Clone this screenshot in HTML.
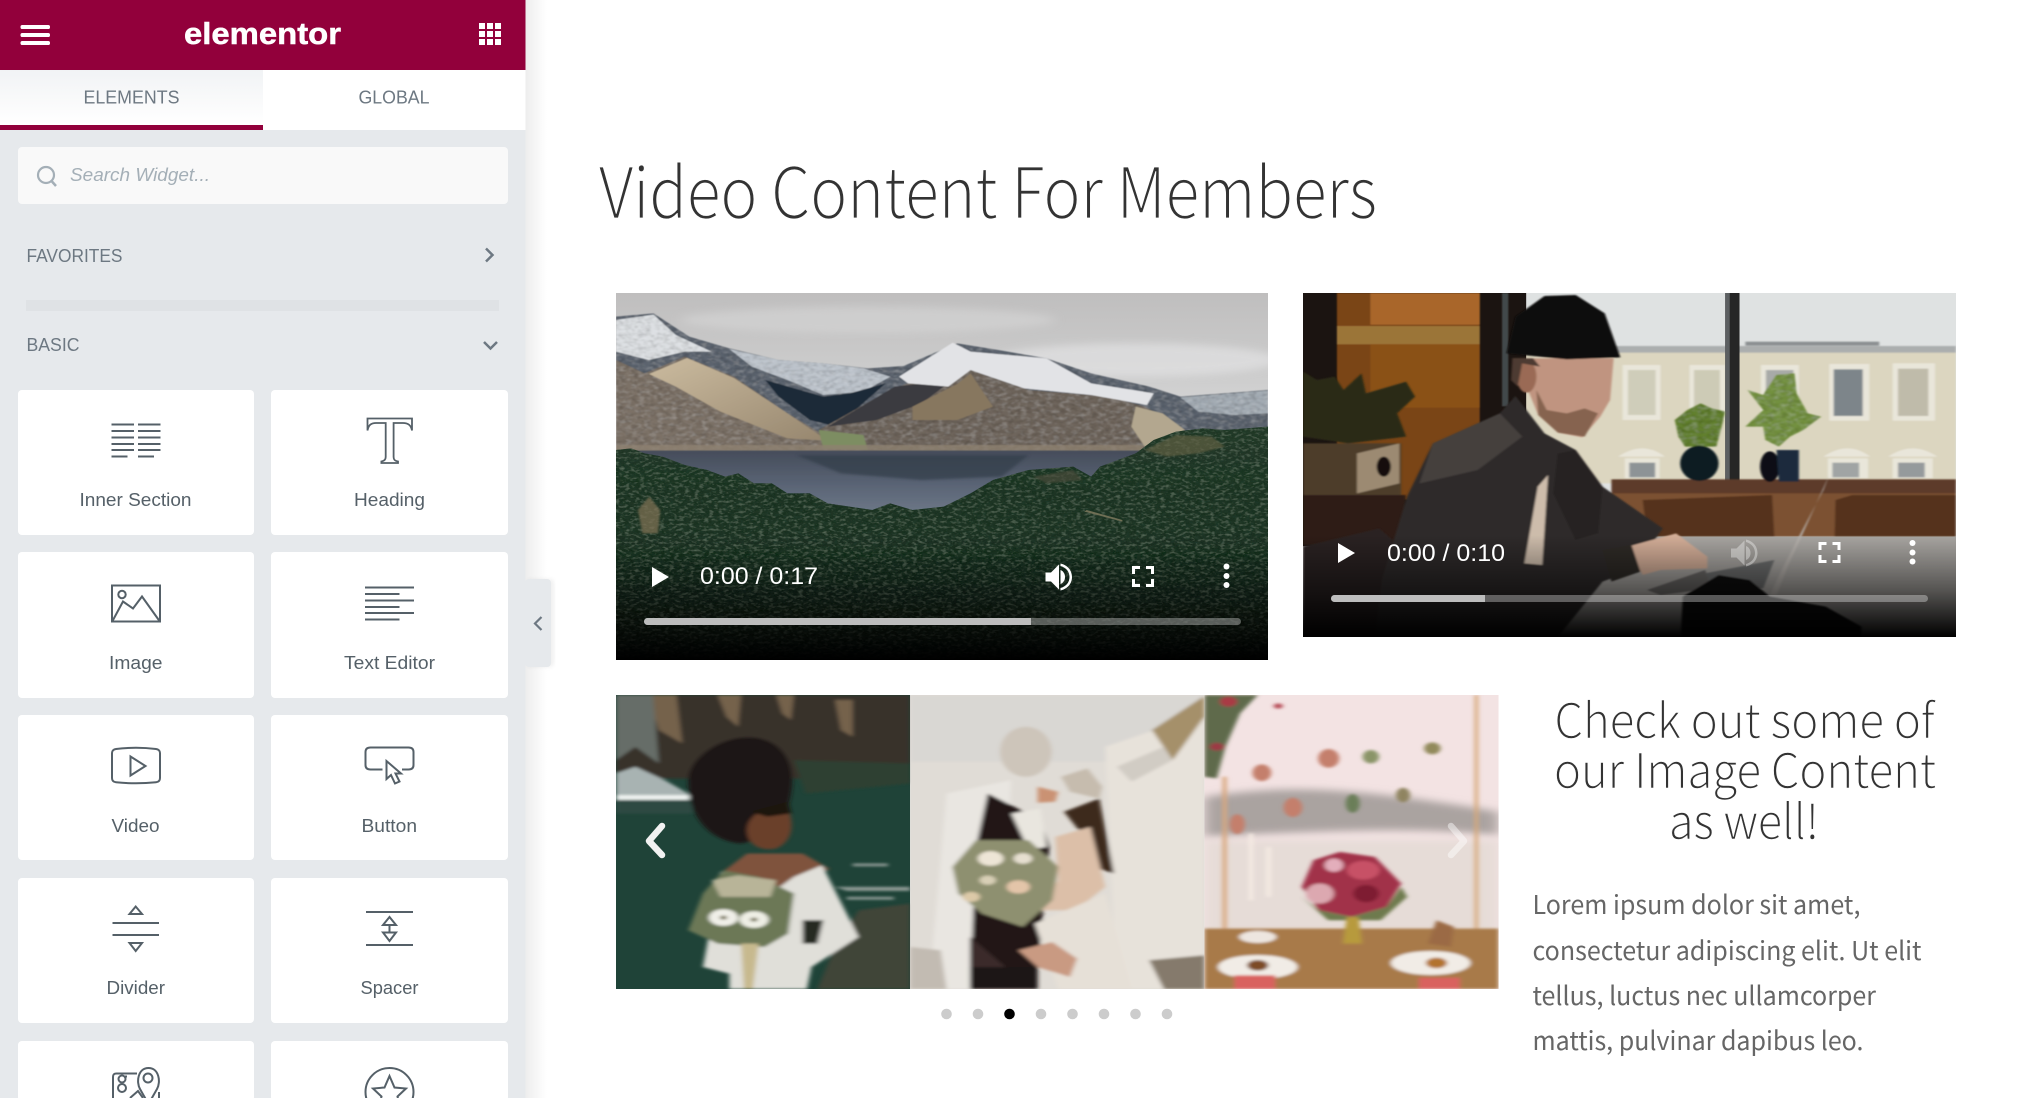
<!DOCTYPE html>
<html lang="en"><head><meta charset="utf-8"><title>Video Content For Members</title>
<style>
html,body{margin:0;padding:0;background:#fff;width:2025px;height:1098px;overflow:hidden}
svg{display:block}
.r{font-family:"Liberation Sans",sans-serif}
.s{font-family:"Noto Sans CJK JP","Liberation Sans",sans-serif}
.lab{font-size:18px;fill:#556068}
.ic{fill:none;stroke:#556068;stroke-width:2}
.t{font-family:"Liberation Sans",sans-serif;font-size:24px;fill:#fff}
</style></head><body>
<svg xmlns="http://www.w3.org/2000/svg" width="2025" height="1098" viewBox="0 0 2025 1098">
<defs>
<linearGradient id="shadow" x1="0" x2="1" y1="0" y2="0"><stop offset="0" stop-color="#000" stop-opacity=".07"/><stop offset="1" stop-color="#000" stop-opacity="0"/></linearGradient>
<linearGradient id="tab" x1="0" x2="0" y1="0" y2="1"><stop offset="0" stop-color="#f1f3f5"/><stop offset=".9" stop-color="#fff"/></linearGradient>
<linearGradient id="ctl" x1="0" x2="0" y1="0" y2="1"><stop offset="0" stop-color="#000" stop-opacity="0"/><stop offset=".55" stop-color="#000" stop-opacity=".5"/><stop offset="1" stop-color="#000" stop-opacity="1"/></linearGradient>
<linearGradient id="sky" x1="0" x2="0" y1="0" y2="1"><stop offset="0" stop-color="#bfbebe"/><stop offset=".5" stop-color="#cdcdcd"/><stop offset="1" stop-color="#dedee0"/></linearGradient>
<linearGradient id="lake" x1="0" x2="0" y1="0" y2="1"><stop offset="0" stop-color="#454c5a"/><stop offset=".5" stop-color="#5a6475"/><stop offset="1" stop-color="#717c8c"/></linearGradient>
<linearGradient id="forest" x1="0" x2="0" y1="0" y2="1"><stop offset="0" stop-color="#223827"/><stop offset=".5" stop-color="#1a2f20"/><stop offset="1" stop-color="#101d14"/></linearGradient>
<linearGradient id="lit" x1="0" x2="1" y1="0" y2="1"><stop offset="0" stop-color="#cbbb9f"/><stop offset="1" stop-color="#96866e"/></linearGradient>
<filter id="b0" x="-5%" y="-5%" width="110%" height="110%"><feGaussianBlur stdDeviation="1.500"/></filter>
<filter id="b1" x="-5%" y="-5%" width="110%" height="110%"><feGaussianBlur stdDeviation="2.500"/></filter>
<filter id="b2" x="-10%" y="-10%" width="120%" height="120%"><feGaussianBlur stdDeviation="4"/></filter>
<filter id="b3" x="-20%" y="-20%" width="140%" height="140%"><feGaussianBlur stdDeviation="12"/></filter>
<filter id="tex" x="0" y="0" width="100%" height="100%">
<feTurbulence type="fractalNoise" baseFrequency=".09 .13" numOctaves="2" seed="4" result="n"/>
<feColorMatrix in="n" type="matrix" values="0 0 0 0 .02  0 0 0 0 .05  0 0 0 0 .03  1.200 0 0 0 -.4" result="d"/>
<feColorMatrix in="n" type="matrix" values="0 0 0 0 .3  0 0 0 0 .42  0 0 0 0 .3  0 .7 0 0 -.34" result="l"/>
<feComposite in="d" in2="SourceAlpha" operator="in" result="c"/>
<feComposite in="l" in2="SourceAlpha" operator="in" result="e"/>
<feMerge><feMergeNode in="SourceGraphic"/><feMergeNode in="c"/><feMergeNode in="e"/></feMerge>
</filter>
<filter id="speck" x="0" y="0" width="100%" height="100%">
<feTurbulence type="fractalNoise" baseFrequency=".07 .1" numOctaves="2" seed="9" result="n"/>
<feColorMatrix in="n" type="matrix" values="0 0 0 0 0  0 0 0 0 0  0 0 0 0 0  .7 0 0 0 -.27" result="d"/>
<feColorMatrix in="n" type="matrix" values="0 0 0 0 1  0 0 0 0 1  0 0 0 0 1  0 .35 0 0 -.16" result="l"/>
<feComposite in="d" in2="SourceAlpha" operator="in" result="c"/>
<feComposite in="l" in2="SourceAlpha" operator="in" result="e"/>
<feMerge><feMergeNode in="SourceGraphic"/><feMergeNode in="c"/><feMergeNode in="e"/></feMerge>
</filter>
</defs>

<rect width="2025" height="1098" fill="#fff"/>

<!-- ===== Title ===== -->
<text class="s" x="599" y="218" font-size="70" font-weight="300" fill="#333" stroke="#fff" stroke-width=".7" textLength="778" lengthAdjust="spacingAndGlyphs">Video Content For Members</text>

<!-- ===== Video 1 ===== -->
<svg x="616" y="293" width="652" height="367" viewBox="36 39 1460 1101" preserveAspectRatio="none">
<rect x="36" y="39" width="1460" height="500" fill="url(#sky)"/>
<ellipse cx="600" cy="120" rx="420" ry="40" fill="#d6d6d6" opacity=".6" filter="url(#b3)"/>
<ellipse cx="1200" cy="240" rx="320" ry="50" fill="#e2e2e3" opacity=".7" filter="url(#b3)"/>
<g filter="url(#b0)">
<g filter="url(#speck)">
<path d="M36 110L120 100 200 170 290 205 400 240 500 250 600 265 680 258 800 190 870 205 1000 235 1100 280 1230 320 1300 350 1496 330V520H36Z" fill="#5b646e"/>
<path d="M36 120L120 104 170 165 250 215 190 215 110 240 36 215Z" fill="#dcdfe2"/>
<path d="M290 207L400 240 500 250 590 265 650 290 590 335 500 345 420 300 340 260Z" fill="#bcc3cb"/>
<path d="M1300 352L1496 332V400L1420 405 1340 395Z" fill="#a3abb3"/>
</g>
<path d="M370 300L500 350 560 340 640 310 530 440 470 420 400 350Z" fill="#1d2a38"/>
<path d="M36 240L100 280 190 230 300 290 420 400 520 480 600 515H36Z" fill="#7c7166" filter="url(#speck)"/>
<path d="M110 282L195 234 300 294 420 400 510 482 420 475 270 395 170 320Z" fill="url(#lit)"/>
<path d="M490 450L650 330 790 260 830 270 960 330 1140 350 1220 380 1310 450 1200 520 600 515Z" fill="#6e655b" filter="url(#speck)"/>
<path d="M560 400L660 320 790 300 720 370 620 420 510 440Z" fill="#3a3a3f"/>
<path d="M670 290L790 188 830 215 1000 235 1100 310 1240 340 1225 375 1100 345 950 325 830 270 780 320 690 310Z" fill="#e2e3e6"/>
<path d="M700 380L800 312 830 280 880 380 800 420 700 420Z" fill="#87775f"/>
<path d="M1200 380L1260 400 1310 450 1220 500 1190 440Z" fill="#b3a78f"/>
<path d="M490 450L590 465 600 510 500 505Z" fill="#7d8d62"/>
<rect x="36" y="495" width="1180" height="20" fill="#8d8170" opacity=".8"/>
</g>
<path d="M36 512H1300V720H36Z" fill="url(#lake)" filter="url(#b0)"/>
<path d="M440 525H960L900 590 720 600 540 580Z" fill="#333c49" opacity=".7" filter="url(#b2)"/>
<g filter="url(#tex)">
<path d="M36 510L70 505 100 520 140 530 190 555 240 570 280 590 310 580 345 610 385 610 420 640 470 640 510 670 610 690 650 670 700 690 770 680 830 640 880 600 960 570 1060 560 1100 590 1120 560 1200 520 1240 480 1290 455 1350 445 1400 450 1496 440V1140H36Z" fill="url(#forest)"/>
</g>
<path d="M1220 510L1290 465 1370 470 1400 500 1340 520 1270 530Z" fill="#5f5e42" opacity=".7" filter="url(#b1)"/>
<path d="M85 690L110 650 135 690 130 760 95 760Z" fill="#7b6f52" opacity=".75" filter="url(#b1)"/>
<path d="M970 590L1060 570 1080 600 1000 610Z" fill="#4a4b3a" opacity=".7" filter="url(#b1)"/>
<path d="M1090 690L1170 720 1170 725 1085 695Z" fill="#6f6f55"/>
<rect x="36" y="800" width="1460" height="340" fill="url(#ctl)"/>
</svg>
<path d="M652 567L669 577 652 587Z" fill="#fff"/>
<text class="t" x="700" y="584" textLength="118" lengthAdjust="spacingAndGlyphs">0:00 / 0:17</text>
<g fill="#fff">
<path d="M1045.500 572.500H1051L1059 564.500V589.500L1051 581.500H1045.500Z"/>
<path d="M1060.500 570V584C1063.500 582.800 1065 580 1065 577S1063.500 571.200 1060.500 570Z"/>
<path d="M1060.500 563.500V566C1066 567.400 1069.500 571.700 1069.500 577S1066 586.600 1060.500 588V590.500C1067.500 589 1072 583.500 1072 577S1067.500 565 1060.500 563.500Z"/>
<path d="M1132 566h8v3h-5v5h-3zM1146 566h8v8h-3v-5h-5zM1132 579h3v5h5v3h-8zM1151 579h3v8h-8v-3h5z"/>
<circle cx="1226.500" cy="566.500" r="3"/><circle cx="1226.500" cy="576" r="3"/><circle cx="1226.500" cy="585" r="3"/>
</g>
<rect x="644" y="618" width="597" height="7" rx="3.500" fill="#fff" fill-opacity=".33"/>
<path d="M647.500 618H1031V625H647.500A3.500 3.500 0 0 1 647.500 618Z" fill="#bdbdbd"/>

<!-- ===== Video 2 ===== -->
<svg x="1303" y="293" width="653" height="344" viewBox="29 39 1463 1032" preserveAspectRatio="none">
<rect x="29" y="39" width="1463" height="1032" fill="#dfe2e2"/>
<g filter="url(#b1)">
<rect x="525" y="200" width="967" height="410" fill="#dcd6c0"/>
<rect x="525" y="198" width="967" height="20" fill="#abaeae"/>
<rect x="1020" y="185" width="300" height="12" fill="#8c9092"/>
<g fill="#e9e6da"><rect x="745" y="255" width="85" height="165"/><rect x="895" y="255" width="80" height="165"/><rect x="1055" y="255" width="85" height="165"/><rect x="1208" y="252" width="90" height="170"/><rect x="1350" y="250" width="95" height="172"/>
<rect x="750" y="535" width="78" height="60"/><rect x="1205" y="535" width="90" height="60"/><rect x="1350" y="535" width="90" height="60"/>
<path d="M735 530Q790 480 840 530ZM1195 530Q1250 480 1300 530ZM1340 530Q1395 480 1450 530Z"/></g>
<rect x="757" y="270" width="62" height="135" fill="#cfcdba"/><rect x="905" y="270" width="58" height="135" fill="#cdcbb6"/><rect x="1066" y="270" width="62" height="135" fill="#a8aaa8"/><rect x="1218" y="268" width="65" height="140" fill="#7d858a"/><rect x="1362" y="266" width="68" height="142" fill="#bfbbaa"/>
<rect x="760" y="548" width="58" height="44" fill="#8d9396"/><rect x="1215" y="548" width="60" height="44" fill="#a0a4a4"/><rect x="1362" y="548" width="60" height="44" fill="#959a9c"/>
</g>
<rect x="975" y="39" width="32" height="570" fill="#262626"/><rect x="975" y="39" width="10" height="570" fill="#5c5f61"/>
<rect x="29" y="39" width="500" height="760" fill="#1b1411"/>
<g filter="url(#b0)">
<rect x="105" y="39" width="320" height="620" fill="#7a4516"/>
<rect x="180" y="39" width="245" height="95" fill="#a9662a"/>
<rect x="105" y="138" width="320" height="55" fill="#9b7539"/>
<rect x="180" y="193" width="245" height="190" fill="#8a5119"/>
<rect x="475" y="39" width="14" height="340" fill="#42484c"/>
</g>
<g filter="url(#b1)">
<path d="M29 275L60 300 100 290 120 330 160 280 170 340 260 305 280 350 240 400 260 470 130 490 29 470Z" fill="#2b2c17"/>
<rect x="29" y="490" width="220" height="155" fill="#4d3e2c"/>
<path d="M150 520L245 490V610L150 640Z" fill="#9c8a72"/>
<ellipse cx="210" cy="560" rx="16" ry="30" fill="#15100e"/>
<rect x="29" y="645" width="230" height="150" fill="#2f1d12"/>
<rect x="720" y="598" width="772" height="45" fill="#5d3a2a"/>
<rect x="525" y="640" width="967" height="130" fill="#7b5131"/>
<path d="M790 660L1080 645 1085 770H800Z" fill="#54301f"/>
<path d="M1222 660L1260 645H1492V770H1220Z" fill="#55301e"/>
<path d="M862 420L890 390 920 370 945 385 975 395 965 450 955 500 885 500 870 470Z" fill="#62802e" filter="url(#speck)"/>
<ellipse cx="917" cy="550" rx="43" ry="53" fill="#0c1d22"/>
<path d="M1025 330L1060 345 1090 285 1130 280 1135 340 1160 400 1190 410 1150 450 1120 470 1095 500 1065 480 1060 440 1020 440 1060 390Z" fill="#73913f" filter="url(#speck)"/>
<ellipse cx="1075" cy="560" rx="22" ry="46" fill="#0b1114"/>
<path d="M1090 510H1140V605H1095Z" fill="#1e2c3e"/>
</g>
<rect x="525" y="770" width="967" height="301" fill="#a8a5a1"/>
<g filter="url(#b1)">
<path d="M29 800L200 745 230 780 200 1071H29Z" fill="#2c2420"/>
<path d="M505 348L570 460 640 510 700 620 835 745 770 870 700 905 600 1071H190L205 900 262 650 320 490 470 400Z" fill="#2f2c2a"/>
<path d="M320 490L470 400 520 470 420 570 290 610Z" fill="#45413d"/>
<path d="M600 520L640 510 700 620 690 760 640 780 590 640Z" fill="#262322"/>
<path d="M555 620L578 585 565 855 525 850Z" fill="#cdbcab"/>
<path d="M498 235L725 235 717 360 695 410 655 472 600 458 556 405 530 320Z" fill="#c09480"/>
<path d="M552 330L575 390 620 400 660 385 690 400 660 470 600 458 556 405Z" fill="#86634f"/>
<ellipse cx="530" cy="290" rx="22" ry="48" fill="#9a6a55"/>
<path d="M498 235L545 235 560 260 520 250 510 320 495 300Z" fill="#4e3b30"/>
<path d="M485 220L505 110 570 48 640 45 705 100 740 232 620 238Z" fill="#0e0b0a"/>
<path d="M757 800L865 760 935 830 935 865 830 870 790 885Z" fill="#d4ae98"/>
<path d="M700 810L765 795 785 875 720 905Z" fill="#2e2a28"/>
<path d="M800 930L930 870 945 925 830 945Z" fill="#6b6866"/>
<path d="M930 880L1085 840 1060 925 950 925Z" fill="#6d6e6e"/>
<path d="M1208 585L1195 630 1105 860 1075 945 1090 945 1115 860Z" fill="#b7b2ad"/>
<path d="M880 950L960 885 1030 900 1075 950 1200 980 1280 1040 1280 1071H875Z" fill="#0f0e0d"/>
</g>
<rect x="29" y="765" width="1463" height="306" fill="url(#ctl)"/>
</svg>
<path d="M1338 543L1355 553 1338 563Z" fill="#fff"/>
<text class="t" x="1387" y="561" textLength="118" lengthAdjust="spacingAndGlyphs">0:00 / 0:10</text>
<g fill="#fff">
<g opacity=".35" transform="translate(-2.500,-1)"><path d="M1733.500 549.500H1739L1747 541.500V566.500L1739 558.500H1733.500Z"/>
<path d="M1748.500 547V561C1751.500 559.800 1753 557 1753 554S1751.500 548.200 1748.500 547Z"/>
<path d="M1748.500 540.500V543C1754 544.400 1757.500 548.700 1757.500 554S1754 563.600 1748.500 565V567.500C1755.500 566 1760 560.500 1760 554S1755.500 542 1748.500 540.500Z"/></g>
<path transform="translate(-2.500,-1)" d="M1821 543h8v3h-5v5h-3zM1835 543h8v8h-3v-5h-5zM1821 556h3v5h5v3h-8zM1840 556h3v8h-8v-3h5z"/>
<circle cx="1912.500" cy="543" r="3"/><circle cx="1912.500" cy="552.500" r="3"/><circle cx="1912.500" cy="561.500" r="3"/>
</g>
<rect x="1331" y="595" width="597" height="7" rx="3.500" fill="#fff" fill-opacity=".33"/>
<path d="M1334.500 595H1485V602H1334.500A3.500 3.500 0 0 1 1334.500 595Z" fill="#bdbdbd"/>

<!-- ===== Carousel ===== -->
<svg x="616" y="695" width="294.200" height="294" viewBox="27 45 501 881" preserveAspectRatio="none">
<rect x="27" y="45" width="501" height="881" fill="#1f4338"/>
<g filter="url(#b2)">
<rect x="27" y="45" width="501" height="250" fill="#38332b"/>
<path d="M80 45L130 45 140 190 100 150ZM200 45L240 45 235 140 215 110ZM300 45L330 45 325 120 310 100ZM400 60L430 60 430 170 410 150Z" fill="#75624c"/>
<path d="M27 45H90L100 250 60 200 27 240Z" fill="#666d68"/>
<path d="M330 240L528 250V310L350 340Z" fill="#2d4031"/>
<path d="M27 280L60 260 110 300 150 340V360H27Z" fill="#a8b3b2"/>
<rect x="27" y="345" width="125" height="14" fill="#eef2f0"/>
<rect x="27" y="360" width="130" height="40" fill="#2f4a42"/>
<path d="M440 690L528 670V926H370L400 800Z" fill="#3f4539"/>
<path d="M400 620L528 620V632L420 632ZM430 550L490 550V558L430 558ZM420 650H500V658H420Z" fill="#8d9a94"/>
<path d="M150 300C150 240 200 170 255 172C310 175 335 250 325 340C320 400 300 470 240 490C180 480 150 400 150 300Z" fill="#1f1613"/>
<path d="M250 450C250 400 290 370 320 385C330 430 330 480 300 505C270 515 250 490 250 450Z" fill="#6b3f2c"/>
<path d="M255 395L320 365 325 400 285 410Z" fill="#1a1210"/>
<path d="M205 580L250 520 345 520 390 565 340 650 230 630Z" fill="#7f523c"/>
<path d="M175 860L205 575 240 600 290 640 330 590 378 555 440 770 360 860 352 926H220V880Z" fill="#e0dfd9"/>
<path d="M150 750L175 640 210 570 270 590 330 640 320 760 280 800 200 790Z" fill="#6c7857"/>
<path d="M190 600L235 585 300 600 290 650 205 650Z" fill="#b8b498"/>
<circle cx="210" cy="712" r="25" fill="#f0efe8"/><circle cx="262" cy="718" r="25" fill="#eeeee5"/>
<circle cx="210" cy="712" r="6" fill="#6e6a4c"/><circle cx="262" cy="718" r="6" fill="#6e6a4c"/>
<path d="M240 790L270 790 260 926 245 926Z" fill="#c7b98e"/>
<path d="M345 720L380 720 370 790 345 790Z" fill="#252a24"/>
</g>
</svg>
<svg x="910.200" y="695" width="294.200" height="294" viewBox="528 45 501 881" preserveAspectRatio="none">
<rect x="528" y="45" width="501" height="881" fill="#e0dcd6"/>
<g filter="url(#b2)">
<rect x="528" y="45" width="501" height="200" fill="#d9d7d3"/>
<path d="M860 200L1029 100V926H880Z" fill="#e7e2da"/>
<path d="M940 150L1029 48V110L975 240Z" fill="#a5906b"/>
<path d="M880 260L960 200 975 240 905 305Z" fill="#d1ccc4"/>
<ellipse cx="725" cy="215" rx="44" ry="75" fill="#cdc5ba"/>
<path d="M590 340L700 300 680 926H560Z" fill="#e9e6e1"/>
<path d="M528 800L580 810 590 926H528Z" fill="#c2bbb2"/>
<path d="M935 840L1029 825V926H960Z" fill="#857a6c"/>
<path d="M660 340L750 420 765 500 745 860 680 860 630 926 640 500Z" fill="#231917"/>
<path d="M630 770L690 860 630 926Z" fill="#3a2c2a"/>
<path d="M630 860L745 860V926H630Z" fill="#1f1615"/>
<path d="M700 400L750 385 760 500 730 510Z" fill="#e9e6df"/>
<path d="M745 320L780 335 775 365 745 368Z" fill="#ca9273"/>
<path d="M785 290L830 265 855 320 850 355 800 335Z" fill="#c6bcae"/>
<path d="M790 395L850 355 875 580 840 560 815 450Z" fill="#3d291e"/>
<path d="M775 470L835 440 860 620 810 690 740 690 780 600Z" fill="#dcbfa8"/>
<path d="M740 730L860 640 905 926H780Z" fill="#e6e0d7"/>
<path d="M600 560L640 480 730 480 780 560 770 660 720 740 650 700 610 640Z" fill="#8e9070"/>
<circle cx="665" cy="535" r="22" fill="#ede5d6"/><circle cx="712" cy="620" r="20" fill="#e3c5a9"/><circle cx="632" cy="650" r="15" fill="#dcc9a8"/><circle cx="720" cy="535" r="16" fill="#e6dfd0"/><circle cx="660" cy="600" r="14" fill="#d8cfb6"/>
<path d="M712 810L770 785 812 835 800 890 745 860Z" fill="#c99a82"/>
</g>
</svg>
<svg x="1204.400" y="695" width="294.200" height="294" viewBox="1029 45 502 881" preserveAspectRatio="none">
<rect x="1029" y="45" width="502" height="881" fill="#f3e3e3"/>
<path d="M1029 350C1150 320 1250 310 1531 395V465C1400 440 1250 450 1029 470Z" fill="#aaa3a0" filter="url(#b3)"/>
<rect x="1029" y="480" width="502" height="280" fill="#e6dcd7" filter="url(#b3)"/>
<g filter="url(#b2)">
<path d="M1029 45H1120L1090 100 1065 200 1050 295 1029 290Z" fill="#5e6a4c"/>
<circle cx="1070" cy="65" r="15" fill="#a93a44"/><circle cx="1050" cy="200" r="12" fill="#9c3b45"/><circle cx="1155" cy="78" r="8" fill="#b8505a"/>
<rect x="1060" y="290" width="7" height="470" fill="#d9a77e"/>
<rect x="1490" y="45" width="6" height="720" fill="#d8a878"/>
<rect x="1105" y="460" width="7" height="200" fill="#f6ece4"/><rect x="1135" y="500" width="7" height="150" fill="#f6ece4"/>
<rect x="1029" y="745" width="502" height="181" fill="#a87a48"/>
<path d="M1195 620L1215 540 1260 515 1320 530 1365 610 1340 680 1280 710 1225 690Z" fill="#a13348"/>
<path d="M1195 650L1225 690 1280 710 1340 680 1365 620 1375 650 1330 720 1240 720Z" fill="#6e7a4e"/>
<ellipse cx="1226" cy="640" rx="24" ry="30" fill="#dca8b0"/><ellipse cx="1300" cy="570" rx="28" ry="28" fill="#c75166"/><ellipse cx="1250" cy="555" rx="16" ry="20" fill="#e3aebb"/><ellipse cx="1305" cy="640" rx="22" ry="26" fill="#7e1f30"/>
<path d="M1272 710L1292 710 1298 790 1265 790Z" fill="#b79a3c"/>
<ellipse cx="1120" cy="860" rx="68" ry="36" fill="#f1ece6"/><ellipse cx="1415" cy="848" rx="68" ry="36" fill="#f1ece6"/>
<ellipse cx="1120" cy="855" rx="18" ry="16" fill="#7d4b28"/><ellipse cx="1425" cy="848" rx="18" ry="16" fill="#b3732f"/>
<rect x="1080" y="885" width="70" height="41" fill="#d9625e"/><rect x="1395" y="892" width="70" height="34" fill="#d9625e"/>
<ellipse cx="1120" cy="770" rx="32" ry="18" fill="#ede6e0"/>
<path d="M1410 790L1425 720 1455 740 1450 800Z" fill="#9b6a45"/>
<g fill="#c47f6c"><ellipse cx="1127" cy="278" rx="16" ry="25"/><ellipse cx="1241" cy="235" rx="18" ry="28"/><ellipse cx="1180" cy="382" rx="16" ry="29"/><ellipse cx="1085" cy="432" rx="13" ry="30"/><ellipse cx="1368" cy="345" rx="12" ry="22" fill="#8f8460"/><ellipse cx="1282" cy="370" rx="12" ry="28" fill="#6b7e58"/><ellipse cx="1313" cy="230" rx="14" ry="20" fill="#8a9468"/><ellipse cx="1418" cy="205" rx="14" ry="18" fill="#928a5c"/></g>
</g>
</svg>
<path d="M662 826L649 841 662 855" fill="none" stroke="#f2f2f2" stroke-width="6.500" stroke-linecap="round" stroke-linejoin="round"/>
<path d="M1451 826L1464 841 1451 855" fill="none" stroke="#fff" stroke-opacity=".45" stroke-width="6.500" stroke-linecap="round" stroke-linejoin="round"/>
<g fill="#cccccc"><circle cx="946.500" cy="1014" r="5.300"/><circle cx="978" cy="1014" r="5.300"/><circle cx="1041" cy="1014" r="5.300"/><circle cx="1072.500" cy="1014" r="5.300"/><circle cx="1104" cy="1014" r="5.300"/><circle cx="1135.500" cy="1014" r="5.300"/><circle cx="1167" cy="1014" r="5.300"/></g>
<circle cx="1009.500" cy="1014" r="5.300" fill="#000"/>

<!-- ===== Right text ===== -->
<g class="s" font-weight="300" font-size="48" fill="#333" stroke="#fff" stroke-width=".5">
<text x="1554.500" y="738" textLength="380" lengthAdjust="spacingAndGlyphs">Check out some of</text>
<text x="1554" y="788" textLength="382" lengthAdjust="spacingAndGlyphs">our Image Content</text>
<text x="1669" y="839" textLength="150" lengthAdjust="spacingAndGlyphs">as well!</text>
</g>
<g class="s" font-size="26" fill="#666">
<text x="1532.500" y="914" textLength="328" lengthAdjust="spacingAndGlyphs">Lorem ipsum dolor sit amet,</text>
<text x="1532.500" y="960" textLength="389" lengthAdjust="spacingAndGlyphs">consectetur adipiscing elit. Ut elit</text>
<text x="1532.500" y="1005" textLength="343.500" lengthAdjust="spacingAndGlyphs">tellus, luctus nec ullamcorper</text>
<text x="1532.500" y="1050" textLength="331" lengthAdjust="spacingAndGlyphs">mattis, pulvinar dapibus leo.</text>
</g>

<!-- ===== Sidebar ===== -->
<rect x="525" y="0" width="22" height="1098" fill="url(#shadow)"/>
<rect x="527" y="579" width="27" height="88" rx="4" fill="#000" opacity=".06" filter="url(#b1)"/>
<rect x="525" y="579" width="26" height="88" rx="4" fill="#e6e9ec"/>
<path d="M541.500 617L535 623.500 541.500 630" fill="none" stroke="#6d7882" stroke-width="2.200"/>
<rect width="525.500" height="1098" fill="#e6e9ec"/>
<rect width="525.500" height="70" fill="#92003b"/>
<g fill="#fff"><rect x="20.500" y="25" width="29.500" height="4" rx="1.800"/><rect x="20.500" y="33" width="29.500" height="4" rx="1.800"/><rect x="20.500" y="41" width="29.500" height="4" rx="1.800"/>
<rect x="479" y="23" width="6" height="6"/><rect x="487" y="23" width="6" height="6"/><rect x="495" y="23" width="6" height="6"/><rect x="479" y="31" width="6" height="6"/><rect x="487" y="31" width="6" height="6"/><rect x="495" y="31" width="6" height="6"/><rect x="479" y="39" width="6" height="6"/><rect x="487" y="39" width="6" height="6"/><rect x="495" y="39" width="6" height="6"/></g>
<text class="r" x="184" y="44" font-size="31" font-weight="700" fill="#fff" stroke="#fff" stroke-width=".5" textLength="157" lengthAdjust="spacingAndGlyphs">elementor</text>
<rect x="0" y="70" width="263" height="60" fill="url(#tab)"/>
<rect x="263" y="70" width="262.500" height="60" fill="#fff"/>
<rect x="0" y="125" width="263" height="5" fill="#92003b"/>
<text class="r" x="83.500" y="103.500" font-size="18" fill="#6d7882" textLength="96" lengthAdjust="spacingAndGlyphs">ELEMENTS</text>
<text class="r" x="358.500" y="103.500" font-size="18" fill="#6d7882" textLength="71" lengthAdjust="spacingAndGlyphs">GLOBAL</text>
<rect x="18" y="147" width="490" height="57" rx="4" fill="#f9f9f9"/>
<circle cx="46" cy="175" r="8" fill="none" stroke="#a4afb7" stroke-width="2.200"/><path d="M51.500 181L56 186" stroke="#a4afb7" stroke-width="2.500" fill="none"/>
<text class="r" x="70" y="181" font-size="18" font-style="italic" fill="#a4afb7" textLength="140" lengthAdjust="spacingAndGlyphs">Search Widget...</text>
<text class="r" x="26.500" y="262" font-size="18" fill="#6d7882" textLength="96" lengthAdjust="spacingAndGlyphs">FAVORITES</text>
<path d="M486 248.500L492.500 255 486 261.500" fill="none" stroke="#6d7882" stroke-width="2.500"/>
<rect x="26" y="300" width="473" height="11" fill="#dfe2e5"/>
<text class="r" x="26.500" y="351" font-size="18" fill="#6d7882" textLength="53" lengthAdjust="spacingAndGlyphs">BASIC</text>
<path d="M484 342L490.500 348.500 497 342" fill="none" stroke="#6d7882" stroke-width="2.500"/>

<g fill="#fff">
<rect x="18" y="390" width="236" height="145" rx="4"/><rect x="271" y="390" width="237" height="145" rx="4"/>
<rect x="18" y="552" width="236" height="146" rx="4"/><rect x="271" y="552" width="237" height="146" rx="4"/>
<rect x="18" y="715" width="236" height="145" rx="4"/><rect x="271" y="715" width="237" height="145" rx="4"/>
<rect x="18" y="878" width="236" height="145" rx="4"/><rect x="271" y="878" width="237" height="145" rx="4"/>
<rect x="18" y="1041" width="236" height="60" rx="4"/><rect x="271" y="1041" width="237" height="60" rx="4"/>
</g>
<g class="r lab">
<text x="79.500" y="506" textLength="112" lengthAdjust="spacingAndGlyphs">Inner Section</text>
<text x="354" y="506" textLength="71" lengthAdjust="spacingAndGlyphs">Heading</text>
<text x="109" y="669" textLength="53.500" lengthAdjust="spacingAndGlyphs">Image</text>
<text x="344" y="669" textLength="91" lengthAdjust="spacingAndGlyphs">Text Editor</text>
<text x="111.500" y="832" textLength="48" lengthAdjust="spacingAndGlyphs">Video</text>
<text x="361.500" y="832" textLength="55.500" lengthAdjust="spacingAndGlyphs">Button</text>
<text x="106.500" y="994" textLength="58.500" lengthAdjust="spacingAndGlyphs">Divider</text>
<text x="360.500" y="994" textLength="58" lengthAdjust="spacingAndGlyphs">Spacer</text>
</g>
<g class="ic">
<path d="M111.500 424.500H134M138 424.500H160.500M111.500 431H134M138 431H160.500M111.500 437.500H134M138 437.500H160.500M111.500 444H134M138 444H160.500M111.500 450H134M138 450H160.500M111.500 456.500H127.500M138 456.500H154"/>
<path d="M367.500 430.500V418.500H412V430.500C411 425 408 423 403 423H393.600V457C393.600 460 395 461 398 461.500V463H381.400V461.500C384 461 385.700 460 385.700 457V423H376C371 423 368.500 425 367.500 430.500Z" stroke-width="1.800"/>
<rect x="112" y="585.500" width="48" height="36"/>
<circle cx="122" cy="594.500" r="3.700"/>
<path d="M112.500 621L123 601.500 133 608.500 142 596.500 159.500 621"/>
<path d="M365 587.500H414M365 594H399.500M365 600.500H414M365 607H399.500M365 613H414M365 619.500H399.500"/>
<path d="M116 749C128 747.500 144 747.500 156 749C158.500 749.300 160 751 160 753V778C160 780.500 158.500 782 156 782.300C144 783.500 128 783.500 116 782.300C113.500 782 112 780.500 112 778V753C112 751 113.500 749.300 116 749Z"/>
<path d="M130.500 756.500L145.500 766 130.500 775.500Z"/>
<path d="M382.500 769.500H370.500C367 769.500 365.500 768 365.500 765V752C365.500 749 367 747.500 370.500 747.500H408.500C412 747.500 413.500 749 413.500 752V765C413.500 768 412 769.500 408.500 769.500H402"/>
<path d="M386.500 761V779L391 775 395 783.500 399.500 781.500 395.500 773.500H401Z"/>
<path d="M135.700 906.500L129.500 914H142Z"/><path d="M112.500 923H159M112.500 935H159"/><path d="M129.500 943H142L135.700 951Z"/>
<path d="M366 912H413M366 945H413"/><path d="M389.500 917L383 925H396ZM383 932.500H396L389.500 941ZM389.500 925V932.500"/>
<path d="M137 1073.500H116.500C114 1073.500 113 1074.500 113 1077V1101M159 1092V1101"/>
<path d="M148.500 1104L140 1089C136 1082 138 1068 148.500 1068S161 1082 157 1089Z"/>
<circle cx="148" cy="1078" r="4.500"/>
<circle cx="122" cy="1079" r="3.500"/><circle cx="122" cy="1088" r="4"/><path d="M125 1076.500H127"/>
<path d="M130 1098L138 1091 143 1098"/>
<circle cx="389.500" cy="1092" r="24"/>
<path d="M389.500 1076L394.500 1087.500 406 1088.500 397.500 1096.500 400 1108 389.500 1102 379 1108 381.500 1096.500 373 1088.500 384.500 1087.500Z"/>
</g>
</svg>
</body></html>
